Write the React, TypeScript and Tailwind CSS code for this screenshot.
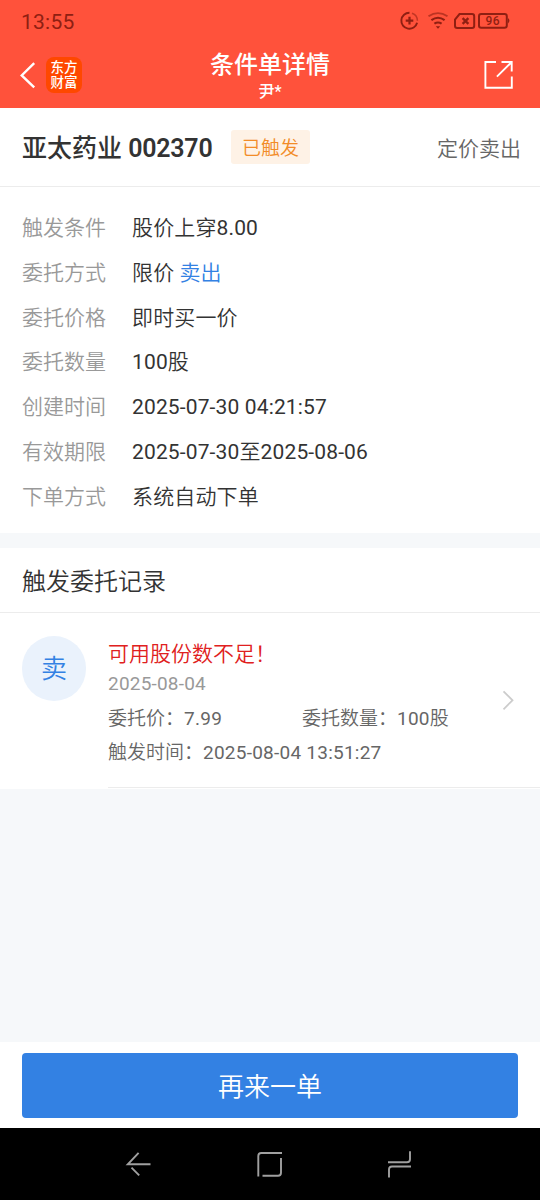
import React from 'react';

const details: { label: string; value: string; accent?: string }[] = [
  { label: '触发条件', value: '股价上穿8.00' },
  { label: '委托方式', value: '限价', accent: '卖出' },
  { label: '委托价格', value: '即时买一价' },
  { label: '委托数量', value: '100股' },
  { label: '创建时间', value: '2025-07-30 04:21:57' },
  { label: '有效期限', value: '2025-07-30至2025-08-06' },
  { label: '下单方式', value: '系统自动下单' },
];

function StatusBar() {
  return (
    <div className="flex h-[42px] items-center justify-between pl-[21px] pr-[30px] text-[#8f1f12]">
      <span className="pt-px text-[21px] leading-[42px] tracking-[0.25px]">13:55</span>
      <svg width="112" height="20" viewBox="398 11 112 20" fill="none" stroke="currentColor">
        <path d="M409.5 12.8a8 8 0 1 0 7.6 10" strokeWidth="1.9" />
        <path d="M412 13.2a8 8 0 0 1 5.4 7.6" strokeWidth="1.5" opacity=".55" />
        <path d="M409.5 16.8v7.6M405.7 20.6h7.6" strokeWidth="2.2" />
        <path d="M428.5 16.3q9.5-6.4 19 0" strokeWidth="1.9" opacity=".6" />
        <path d="M431.4 20.1q6.6-4.8 13.2 0M434.4 23.7q3.6-2.5 7.2 0" strokeWidth="2.1" />
        <path d="M435.8 26.3h4.4l-2.2 2.4z" fill="currentColor" stroke="none" />
        <path d="M459.5 14H472q2.2 0 2.2 2.2v9.6q0 2.2-2.2 2.2h-14.8q-2.2 0-2.2-2.2v-6.2z" strokeWidth="2" />
        <path d="m462.6 18.2 5.8 5.6m0-5.6-5.8 5.6" strokeWidth="2.3" />
        <rect x="479" y="14" width="27.8" height="13.8" rx="2.2" strokeWidth="2" />
        <path d="M508 18q2.8 2.6 0 5.4z" fill="currentColor" stroke="none" />
        <text x="492.7" y="25.2" textAnchor="middle" fill="currentColor" stroke="none" className="text-[12px] font-medium tracking-[0.4px]">96</text>
      </svg>
    </div>
  );
}

function AppHeader() {
  return (
    <div className="grid h-[66px] grid-cols-[1fr_160px_1fr] text-white">
      <div className="flex items-start pl-5 pt-[15px]">
        <svg width="16" height="36" viewBox="0 0 16 36" fill="none" stroke="currentColor" strokeWidth="2.4">
          <path d="M14.2 6.2 1.7 18.4l12.5 12" />
        </svg>
        <div className="ml-[10px] flex h-9 w-9 flex-col items-center justify-center whitespace-pre rounded-[8px] bg-[#ff4800] pb-[2px] text-center font-['Noto_Sans_CJK_SC',sans-serif] text-[13.5px] font-medium leading-[15px]">
          {'东方\n财富'}
        </div>
      </div>
      <div className="flex flex-col items-center pt-[8px] font-[Roboto,'Noto_Sans_CJK_SC',sans-serif]">
        <h1 className="text-[24px] font-medium leading-[30px]">条件单详情</h1>
        <span className="text-[16px] font-medium leading-[24px]">尹*</span>
      </div>
      <div className="flex items-start justify-end pr-[26px] pt-[18px]">
        <svg width="30" height="30" viewBox="0 0 30 30" fill="none" stroke="currentColor" strokeWidth="1.9">
          <path d="M12 2H1.4v25.8h26.4V16.4M17.5 2h10.2v9.5M27.5 2.2 12.9 16.6" />
        </svg>
      </div>
    </div>
  );
}

function RecordCard() {
  return (
    <div className="flex h-[176px] bg-white pl-[22px]">
      <div className="mt-[23px] flex h-[65px] w-16 shrink-0 items-center justify-center rounded-full bg-[#eaf2fc] pt-px text-[26px] leading-none text-[#3381e3]">
        卖
      </div>
      <div className="ml-[22px] mb-px flex flex-1 border-b border-[#ececec] pt-[24px]">
        <div className="flex-1 text-[19px] text-[#666]">
          <div className="text-[21px] leading-[34px] text-[#e02020]">可用股份数不足！</div>
          <div className="text-[19px] leading-[26px] tracking-[0.2px] text-[#999]">2025-08-04</div>
          <div className="mt-[5px] flex leading-[34px]">
            <span className="w-[194px]">
              委托价：<span className="tracking-[0.25px]">7.99</span>
            </span>
            <span>
              委托数量：<span className="tracking-[0.25px]">100</span>股
            </span>
          </div>
          <div className="leading-[34px]">
            触发时间：<span className="tracking-[0.24px]">2025-08-04 13:51:27</span>
          </div>
        </div>
        <svg className="mr-[25px] mt-[53px]" width="13" height="20" viewBox="0 0 13 20" fill="none" stroke="#ccc" strokeWidth="1.8">
          <path d="m1.5 1.3 9 9-9 9" />
        </svg>
      </div>
    </div>
  );
}

function NavBar() {
  return (
    <nav className="flex h-[72px] items-center justify-center bg-black text-[#a0a0a0]">
      <svg width="290" height="32" viewBox="125 1148 290 32" fill="none" stroke="currentColor" strokeWidth="1.9">
        <path d="M150.5 1164.3h-22.7l10.8-11.4M131.5 1167.7l7.7 7.7" />
        <path d="M258.3 1176.5V1156q0-3 3-3H282M281 1158v14.7q0 3-3 3h-15.5" />
        <path d="M388 1162.3h19q3 0 3-3v-8M411 1166.5h-19q-3 0-3 3v8" />
      </svg>
    </nav>
  );
}

export default function App() {
  return (
    <div className="flex h-[1200px] w-[540px] flex-col overflow-hidden bg-[#f6f8fa] font-[Roboto,'Noto_Sans_CJK_SC_DemiLight','Noto_Sans_CJK_SC',sans-serif] text-[#333]">
      <header className="h-[108px] bg-[#ff523b]">
        <StatusBar />
        <AppHeader />
      </header>

      <section className="h-[425px] bg-white">
        <div className="flex h-[79px] items-center border-b border-[#ececec] pl-[22px] pr-[19px]">
          <h2 className="w-[209px] whitespace-nowrap pt-[3px] font-[Roboto,'Noto_Sans_CJK_SC',sans-serif] text-[25px] font-medium leading-[36px]">
            亚太药业 <span className="font-semibold tracking-[-0.25px]">002370</span>
          </h2>
          <span className="flex h-[34px] w-[79px] items-center justify-center rounded-[3px] bg-[#fef2e6] pt-[3px] text-[19px] leading-[34px] text-[#f28c28]">
            已触发
          </span>
          <span className="ml-auto pt-[5px] text-[21px] text-[#666]">定价卖出</span>
        </div>
        <dl className="pl-[22px] pt-[19px] text-[21px] leading-[44.8px]">
          {details.map((row) => (
            <div key={row.label} className="flex h-[44.8px]">
              <dt className="w-[110px] text-[#999]">{row.label}</dt>
              <dd className="tracking-[0.14px]">
                {row.value}
                {row.accent && <span className="tracking-normal text-[#3381e3]"> {row.accent}</span>}
              </dd>
            </div>
          ))}
        </dl>
      </section>

      <section className="mt-[15px]">
        <h2 className="h-[65px] border-b border-[#ececec] bg-white pl-[22px] pt-[2px] text-[24px] leading-[65px]">触发委托记录</h2>
        <RecordCard />
      </section>

      <footer className="mt-auto">
        <div className="h-[86px] bg-white px-[22px] pt-[11px]">
          <button className="h-[65px] w-full rounded-[4px] bg-[#3381e3] pt-[3px] text-[26px] leading-[62px] text-white">再来一单</button>
        </div>
        <NavBar />
      </footer>
    </div>
  );
}
